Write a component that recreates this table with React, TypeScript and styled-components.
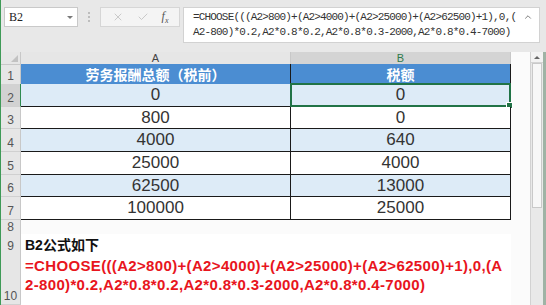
import React from 'react'
import styled, { createGlobalStyle } from 'styled-components'
import { X, Check, ChevronUp } from 'lucide-react'

const GlobalStyle = createGlobalStyle`
  html, body {
    margin: 0;
    padding: 0;
    background: #e8e8e8;
  }
  * {
    box-sizing: border-box;
  }
`

const Window = styled.div`
  width: 546px;
  height: 305px;
  overflow: hidden;
  display: flex;
  flex-direction: column;
  border-left: 1px solid #3f9a57;
  background: #e8e8e8;
  font-family: 'Liberation Sans', 'Noto Sans CJK SC', sans-serif;
`

const FormulaBar = styled.div`
  height: 52px;
  flex-shrink: 0;
  display: flex;
  align-items: flex-start;
  padding: 7px 6px 0 3px;
  background: #e8e8e8;
`

const NameBox = styled.div`
  width: 74px;
  height: 20px;
  display: flex;
  align-items: center;
  justify-content: space-between;
  padding: 0 4px 0 4px;
  background: #fff;
  border: 1px solid #c9c9c9;
  font-family: 'Liberation Serif', 'Noto Sans CJK SC', serif;
  font-size: 12px;
  color: #222;
`

const DropArrow = styled.span`
  width: 0;
  height: 0;
  border-left: 3px solid transparent;
  border-right: 3px solid transparent;
  border-top: 3px solid #7a7a7a;
`

const Grip = styled.div`
  width: 22px;
  height: 20px;
  display: flex;
  flex-direction: column;
  align-items: center;
  justify-content: center;
  gap: 2px;

  span {
    width: 2px;
    height: 2px;
    background: #bdbdbd;
  }
`

const FnBox = styled.div`
  width: 80px;
  height: 20px;
  display: flex;
  align-items: center;
  justify-content: space-around;
  padding: 0 4px;
  background: #f4f4f4;
  border: 1px solid #d6d6d6;
  color: #bbbbbb;
`

const FxLabel = styled.span`
  font-family: 'Liberation Serif', serif;
  font-style: italic;
  font-size: 12px;
  color: #555;

  sub {
    font-size: 8px;
  }
`

const FormulaBox = styled.div`
  margin-left: 3px;
  flex: 1;
  height: 36px;
  display: flex;
  justify-content: space-between;
  padding: 2px 6px 0 9px;
  background: #fff;
  border: 1px solid #d2d2d2;
  font-family: 'Liberation Mono', 'Noto Sans CJK SC', monospace;
  font-size: 11px;
  letter-spacing: -0.83px;
  line-height: 15px;
  color: #333;
  white-space: pre;
`

const Caret = styled.div`
  color: #666;
  padding-top: 2px;
`

const Sheet = styled.div`
  flex: 1;
  display: flex;
  min-height: 0;
`

const Grid = styled.div`
  flex: 1;
  display: flex;
  flex-direction: column;
  background: #fbfbfb;
`

const Row = styled.div<{ $h: number }>`
  height: ${p => p.$h}px;
  flex-shrink: 0;
  display: grid;
  grid-template-columns: 20px 270px 220px 1fr;
`

const WideRow = styled(Row)`
  grid-template-columns: 20px 490px 1fr;
`

const Corner = styled.div`
  background: #e6e6e6;
  border-right: 1px solid #c8c8c8;
  border-bottom: 1px solid #c8c8c8;
  position: relative;

  &::after {
    content: '';
    position: absolute;
    right: 2px;
    bottom: 2px;
    border-left: 7px solid transparent;
    border-bottom: 7px solid #c2c2c2;
  }
`

const ColHead = styled.div<{ $active?: boolean }>`
  display: flex;
  align-items: center;
  justify-content: center;
  background: ${p => (p.$active ? '#d4d4d4' : '#e6e6e6')};
  border-right: 1px solid #c8c8c8;
  border-bottom: 1px solid ${p => (p.$active ? '#2f8a4f' : '#c8c8c8')};
  font-size: 11px;
  color: ${p => (p.$active ? '#2f7a4a' : '#444')};
`

const RowHead = styled.div<{ $active?: boolean }>`
  display: flex;
  align-items: flex-end;
  justify-content: center;
  padding-bottom: 1px;
  background: ${p => (p.$active ? '#d2d2d2' : '#e6e6e6')};
  border-right: 1px solid ${p => (p.$active ? '#2f8a4f' : '#c8c8c8')};
  border-bottom: 1px solid #d0d0d0;
  font-size: 12px;
  color: #555;
`

type Tone = 'head' | 'blue' | 'white'

const toneBg: Record<Tone, string> = {
  head: '#4b8dd2',
  blue: '#ddebf7',
  white: '#ffffff',
}

const Cell = styled.div<{ $tone: Tone }>`
  position: relative;
  display: flex;
  align-items: center;
  justify-content: center;
  background: ${p => toneBg[p.$tone]};
  border-right: 1px solid #1a1a1a;
  border-bottom: 1px solid #1a1a1a;
  font-size: ${p => (p.$tone === 'head' ? '14px' : '17px')};
  font-weight: ${p => (p.$tone === 'head' ? 700 : 400)};
  color: ${p => (p.$tone === 'head' ? '#fff' : '#333')};
`

const Blank = styled.div`
  background: #fbfbfb;
`

const Selection = styled.div`
  position: absolute;
  inset: -1px -1px -1px -1px;
  border: 2px solid #217346;
  pointer-events: none;

  &::after {
    content: '';
    position: absolute;
    right: -4px;
    bottom: -4px;
    width: 5px;
    height: 5px;
    background: #217346;
    border: 1px solid #fff;
  }
`

const NoteCell = styled.div`
  display: flex;
  align-items: flex-end;
  padding: 0 0 1px 4px;
  background: #fff;
  font-size: 14px;
  font-weight: 700;
  color: #111;
`

const FormulaNote = styled.div`
  padding: 2px 0 0 4px;
  background: #fff;
  font-size: 15px;
  font-weight: 700;
  letter-spacing: 0.34px;
  line-height: 19px;
  color: #e8151d;
  white-space: pre;
`

const Scrollbar = styled.div`
  width: 13px;
  flex-shrink: 0;
  display: flex;
  flex-direction: column;
  background: #e9e9e9;
  border-left: 1px solid #d2d2d2;
`

const ScrollUp = styled.div`
  height: 11px;
  display: flex;
  align-items: center;
  justify-content: center;
  background: #f3f3f3;
  border-bottom: 1px solid #d4d4d4;

  &::before {
    content: '';
    border-left: 3px solid transparent;
    border-right: 3px solid transparent;
    border-bottom: 3px solid #666;
  }
`

const Thumb = styled.div`
  height: 145px;
  margin: 0 1px;
  background: #f7f7f7;
  border: 1px solid #c9c9c9;
`

const Edge = styled.div`
  width: 3px;
  flex-shrink: 0;
  background: #9fb3a5;
`

const rows: { a: string; b: string; tone: Tone; h: number }[] = [
  { a: '劳务报酬总额（税前）', b: '税额', tone: 'head', h: 20 },
  { a: '0', b: '0', tone: 'blue', h: 23 },
  { a: '800', b: '0', tone: 'white', h: 22 },
  { a: '4000', b: '640', tone: 'blue', h: 23 },
  { a: '25000', b: '4000', tone: 'white', h: 23 },
  { a: '62500', b: '13000', tone: 'blue', h: 22 },
  { a: '100000', b: '25000', tone: 'white', h: 23 },
]

const formulaLine1 = '=CHOOSE(((A2>800)+(A2>4000)+(A2>25000)+(A2>62500)+1),0,('
const formulaLine2 = 'A2-800)*0.2,A2*0.8*0.2,A2*0.8*0.3-2000,A2*0.8*0.4-7000)'

export default function App() {
  return (
    <>
      <GlobalStyle />
      <Window>
        <FormulaBar>
          <NameBox>
            B2
            <DropArrow />
          </NameBox>
          <Grip>
            <span />
            <span />
            <span />
          </Grip>
          <FnBox>
            <X size={12} strokeWidth={1.5} />
            <Check size={12} strokeWidth={1.5} />
            <FxLabel>
              f<sub>x</sub>
            </FxLabel>
          </FnBox>
          <FormulaBox>
            <div>
              {formulaLine1}
              {'\n'}
              {formulaLine2}
            </div>
            <Caret>
              <ChevronUp size={10} strokeWidth={2} />
            </Caret>
          </FormulaBox>
        </FormulaBar>
        <Sheet>
          <Grid>
            <Row $h={12}>
              <Corner />
              <ColHead>A</ColHead>
              <ColHead $active>B</ColHead>
              <Blank />
            </Row>
            {rows.map((r, i) => (
              <Row key={i} $h={r.h}>
                <RowHead $active={i === 1}>{i + 1}</RowHead>
                <Cell $tone={r.tone}>{r.a}</Cell>
                <Cell $tone={r.tone}>
                  {r.b}
                  {i === 1 && <Selection />}
                </Cell>
                <Blank />
              </Row>
            ))}
            <WideRow $h={14}>
              <RowHead>8</RowHead>
              <Blank />
              <Blank />
            </WideRow>
            <WideRow $h={20}>
              <RowHead>9</RowHead>
              <NoteCell>B2公式如下</NoteCell>
              <Blank />
            </WideRow>
            <WideRow $h={51}>
              <RowHead>10</RowHead>
              <FormulaNote>
                {formulaLine1 + 'A'}
                {'\n'}
                {formulaLine2.slice(1)}
              </FormulaNote>
              <Blank />
            </WideRow>
          </Grid>
          <Scrollbar>
            <ScrollUp />
            <Thumb />
          </Scrollbar>
          <Edge />
        </Sheet>
      </Window>
    </>
  )
}
